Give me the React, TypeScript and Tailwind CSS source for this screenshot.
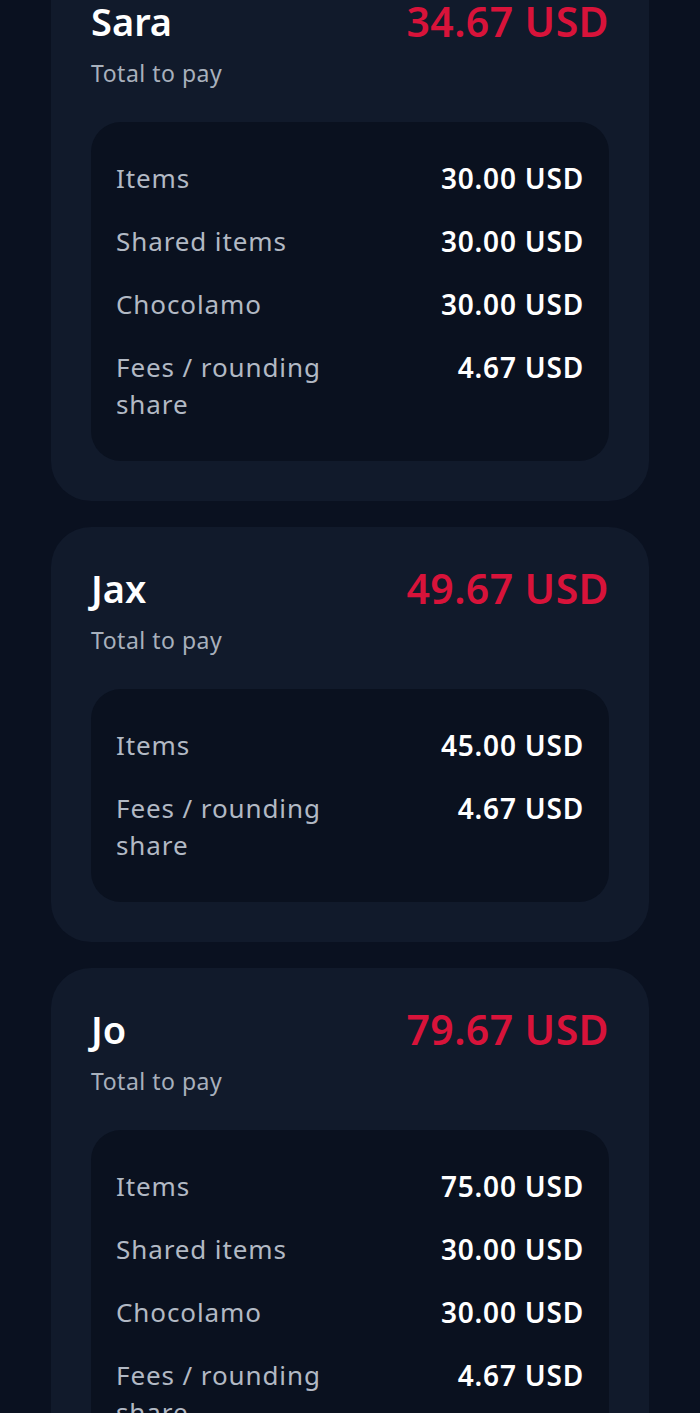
import React from "react";

type Row = { label: string; value: string };
type Person = { name: string; total: string; rows: Row[] };

const people: Person[] = [
  {
    name: "Sara",
    total: "34.67 USD",
    rows: [
      { label: "Items", value: "30.00 USD" },
      { label: "Shared items", value: "30.00 USD" },
      { label: "Chocolamo", value: "30.00 USD" },
      { label: "Fees / rounding share", value: "4.67 USD" },
    ],
  },
  {
    name: "Jax",
    total: "49.67 USD",
    rows: [
      { label: "Items", value: "45.00 USD" },
      { label: "Fees / rounding share", value: "4.67 USD" },
    ],
  },
  {
    name: "Jo",
    total: "79.67 USD",
    rows: [
      { label: "Items", value: "75.00 USD" },
      { label: "Shared items", value: "30.00 USD" },
      { label: "Chocolamo", value: "30.00 USD" },
      { label: "Fees / rounding share", value: "4.67 USD" },
    ],
  },
];

function Card({ p }: { p: Person }) {
  return (
    <div className="rounded-[40px] bg-[#111a2b] px-[40px] pt-[39px] pb-[40px]">
      <div className="flex h-[44px] items-center justify-between">
        <div className="text-[38px] font-semibold leading-[44px] text-white">{p.name}</div>
        <div className="text-[41px] font-semibold leading-[44px] tracking-[0.4px] text-[#d8133a]">{p.total}</div>
      </div>
      <div className="mt-[14px] text-[23px] leading-[32px] tracking-[0.5px] text-[#a8b0bc]">Total to pay</div>
      <div className="mt-[33px] flex flex-col gap-[26px] rounded-[30px] bg-[#0a111f] px-[25px] py-[38px]">
        {p.rows.map((r, i) => (
          <div key={i} className="flex items-start justify-between">
            <div className="max-w-[240px] text-[26px] leading-[37px] tracking-[0.9px] text-[#b2b9c4]">{r.label}</div>
            <div className="text-[28px] font-semibold leading-[37px] tracking-[0.8px] text-white">{r.value}</div>
          </div>
        ))}
      </div>
    </div>
  );
}

export default function App() {
  return (
    <div
      className="h-[1413px] overflow-hidden bg-[#0a1120]"
      style={{ fontFamily: '"Noto Sans", "Open Sans", sans-serif' }}
    >
      <div className="-mt-[40px] flex flex-col gap-[26px] px-[51px]">
        {people.map((p) => (
          <Card key={p.name} p={p} />
        ))}
      </div>
    </div>
  );
}
